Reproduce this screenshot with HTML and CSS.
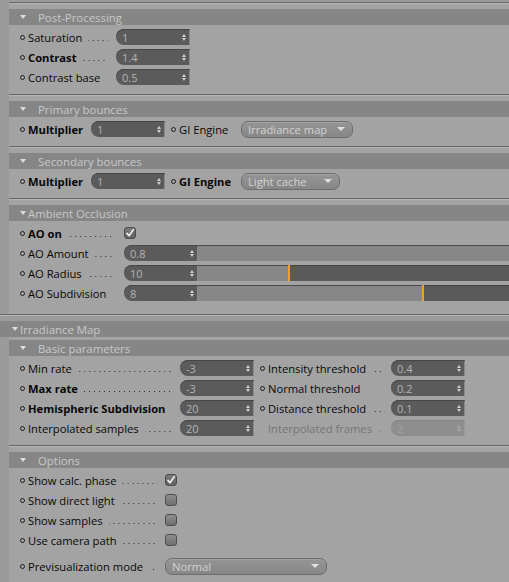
FILE: index.html
```html
<!DOCTYPE html>
<html lang="en">
<head>
    <meta charset="UTF-8">
    <title>Global Illumination</title>
    <link rel="stylesheet" href="styles.css">
</head>
<body>
    <section class="group">
        <div class="group-head"><i class="tri"></i>Post-Processing</div>
        <div class="row">
            <span class="lbl w-post"><i class="dot"></i>Saturation<span class="leader"></span></span>
            <span class="num">1<span class="spin"></span></span>
        </div>
        <div class="row">
            <span class="lbl b w-post"><i class="dot"></i>Contrast<span class="leader"></span></span>
            <span class="num">1.4<span class="spin"></span></span>
        </div>
        <div class="row">
            <span class="lbl w-post"><i class="dot"></i>Contrast base</span>
            <span class="num">0.5<span class="spin"></span></span>
        </div>
    </section>

    <section class="group">
        <div class="group-head"><i class="tri"></i>Primary bounces</div>
        <div class="row">
            <span class="lbl b w-mul"><i class="dot"></i>Multiplier</span>
            <span class="num">1<span class="spin"></span></span>
            <span class="lbl w-gi"><i class="dot"></i>GI Engine</span>
            <span class="drop w-irr">Irradiance map<span class="caret"></span></span>
        </div>
    </section>

    <section class="group">
        <div class="group-head"><i class="tri"></i>Secondary bounces</div>
        <div class="row">
            <span class="lbl b w-mul"><i class="dot"></i>Multiplier</span>
            <span class="num">1<span class="spin"></span></span>
            <span class="lbl b w-gi"><i class="dot"></i>GI Engine</span>
            <span class="drop w-lc">Light cache<span class="caret"></span></span>
        </div>
    </section>

    <section class="group last">
        <div class="group-head"><i class="tri tight"></i>Ambient Occlusion</div>
        <div class="row">
            <span class="lbl b w-ao"><i class="dot"></i>AO on<span class="leader"></span></span>
            <span class="check on"><svg width="10" height="10" viewBox="0 0 10 10"><path d="M2 5.4 L4 7.8 L8.2 1.8" fill="none" stroke="#ececec" stroke-width="1.7" stroke-linecap="round" stroke-linejoin="round"/></svg></span>
        </div>
        <div class="row">
            <span class="lbl w-ao"><i class="dot"></i>AO Amount<span class="leader"></span></span>
            <span class="num">0.8<span class="spin"></span></span>
            <span class="track"><span class="fill" style="width: 100%"></span></span>
        </div>
        <div class="row">
            <span class="lbl w-ao"><i class="dot"></i>AO Radius<span class="leader"></span></span>
            <span class="num">10<span class="spin"></span></span>
            <span class="track"><span class="fill mark" style="width: 92px"></span></span>
        </div>
        <div class="row">
            <span class="lbl w-ao"><i class="dot"></i>AO Subdivision<span class="leader"></span></span>
            <span class="num">8<span class="spin"></span></span>
            <span class="track"><span class="fill mark" style="width: 226px"></span></span>
        </div>
    </section>

    <section class="section">
        <div class="section-head"><i class="tri tight"></i>Irradiance Map</div>

        <div class="group inner">
            <div class="group-head"><i class="tri"></i>Basic parameters</div>
            <div class="row">
                <span class="lbl w-basic"><i class="dot"></i>Min rate<span class="leader"></span></span>
                <span class="num">-3<span class="spin"></span></span>
                <span class="lbl w-thr"><i class="dot"></i>Intensity threshold<span class="leader"></span></span>
                <span class="num">0.4<span class="spin"></span></span>
            </div>
            <div class="row">
                <span class="lbl b w-basic"><i class="dot"></i>Max rate<span class="leader"></span></span>
                <span class="num">-3<span class="spin"></span></span>
                <span class="lbl w-thr"><i class="dot"></i>Normal threshold</span>
                <span class="num">0.2<span class="spin"></span></span>
            </div>
            <div class="row">
                <span class="lbl b w-basic"><i class="dot"></i>Hemispheric Subdivision</span>
                <span class="num">20<span class="spin"></span></span>
                <span class="lbl w-thr"><i class="dot"></i>Distance threshold<span class="leader"></span></span>
                <span class="num">0.1<span class="spin"></span></span>
            </div>
            <div class="row">
                <span class="lbl w-basic"><i class="dot"></i>Interpolated samples<span class="leader"></span></span>
                <span class="num">20<span class="spin"></span></span>
                <span class="lbl off w-thr"><i class="dot"></i>Interpolated frames<span class="leader"></span></span>
                <span class="num off">2<span class="spin"></span></span>
            </div>
        </div>

        <div class="group">
            <div class="group-head"><i class="tri"></i>Options</div>
            <div class="row">
                <span class="lbl w-opt"><i class="dot"></i>Show calc. phase<span class="leader"></span></span>
                <span class="check on"><svg width="10" height="10" viewBox="0 0 10 10"><path d="M2 5.4 L4 7.8 L8.2 1.8" fill="none" stroke="#ececec" stroke-width="1.7" stroke-linecap="round" stroke-linejoin="round"/></svg></span>
            </div>
            <div class="row">
                <span class="lbl w-opt"><i class="dot"></i>Show direct light<span class="leader"></span></span>
                <span class="check"></span>
            </div>
            <div class="row">
                <span class="lbl w-opt"><i class="dot"></i>Show samples<span class="leader"></span></span>
                <span class="check"></span>
            </div>
            <div class="row">
                <span class="lbl w-opt"><i class="dot"></i>Use camera path<span class="leader"></span></span>
                <span class="check"></span>
            </div>
            <div class="row spaced">
                <span class="lbl w-opt"><i class="dot"></i>Previsualization mode<span class="leader"></span></span>
                <span class="drop w-prev">Normal<span class="caret"></span></span>
            </div>
        </div>
    </section>
</body>
</html>
```

FILE: styles.css
```css
* {
    margin: 0;
    padding: 0;
    box-sizing: border-box;
}
body {
    background: #9b9b9b;
    font-family: "Open Sans", "DejaVu Sans", sans-serif;
    font-size: 11.2px;
    color: #080808;
    padding-top: 2px;
    overflow: hidden;
}

/* groups */
.group {
    margin-left: 9px;
    background: #a3a3a3;
    border-top: 1px solid #666;
    box-shadow: inset 0 1px 0 #b6b6b6;
    padding: 6px 0 7px;
}
.group.last {
    padding-bottom: 11px;
}
.group.inner {
    border-top: none;
    box-shadow: none;
    padding-top: 3px;
}
.group-head,
.section-head {
    display: flex;
    align-items: center;
    height: 16px;
    background: #868686;
    color: #c8c8c8;
    font-size: 11.4px;
    padding-left: 11px;
    margin-bottom: 2px;
}
.section {
    border-top: 1px solid #666;
    box-shadow: inset 0 1px 0 #b6b6b6;
    padding-top: 6px;
}
.section-head {
    padding-left: 12px;
    margin-bottom: 0;
}
.tri {
    width: 0;
    height: 0;
    border-left: 3.5px solid transparent;
    border-right: 3.5px solid transparent;
    border-top: 4px solid #dcdcdc;
    margin-right: 12px;
}
.tri.tight {
    margin-right: 2px;
}

/* rows */
.row {
    display: flex;
    align-items: center;
    height: 20px;
    padding-left: 11px;
}
.row.spaced {
    margin-top: 6px;
}
.lbl {
    display: flex;
    align-items: center;
    height: 20px;
    flex: none;
    white-space: nowrap;
}
.lbl.b {
    font-weight: 700;
}
.lbl.off {
    color: #767676;
}
.lbl.off .dot {
    visibility: hidden;
}
.dot {
    width: 5px;
    height: 5px;
    border: 1px solid #1c1c1c;
    border-radius: 50%;
    margin-right: 3px;
    flex: none;
}
.leader {
    flex: 1;
    align-self: flex-end;
    height: 1px;
    margin: 0 0 6px 6px;
    background: linear-gradient(to right, #2e2e2e 1px, transparent 1px) right center / 5px 1px repeat-x;
}
.lbl.off .leader {
    background-image: linear-gradient(to right, #7c7c7c 1px, transparent 1px);
}

.w-post { width: 88px; margin-right: 8px; }
.w-mul { width: 64px; margin-right: 7px; }
.w-gi { width: 63px; margin-left: 6px; margin-right: 7px; }
.w-ao { width: 95px; margin-right: 9px; }
.w-basic { width: 154px; margin-right: 6px; }
.w-thr { width: 125px; margin-left: 6px; margin-right: 6px; }
.w-opt { width: 138px; margin-right: 7px; }

/* number field */
.num {
    display: flex;
    align-items: center;
    justify-content: space-between;
    flex: none;
    width: 74px;
    height: 16px;
    padding: 0 3px 0 6px;
    border-radius: 8px 1px 1px 8px;
    background: #5b5b5b;
    box-shadow: inset 0 1px 0 #464646, inset -1px 0 0 #8a8a8a;
    color: #b3b3b3;
    font-size: 11px;
}
.num.off {
    background: #8e8e8e;
    box-shadow: inset 0 1px 0 #848484, inset -1px 0 0 #9a9a9a;
    color: #a2a2a2;
}
.spin {
    display: flex;
    flex-direction: column;
    gap: 1px;
    margin-right: 1px;
}
.spin::before,
.spin::after {
    content: "";
    border-left: 2.5px solid transparent;
    border-right: 2.5px solid transparent;
}
.spin::before {
    border-bottom: 3px solid #cfcfcf;
}
.spin::after {
    border-top: 3px solid #cfcfcf;
}
.num.off .spin::before { border-bottom-color: #a6a6a6; }
.num.off .spin::after { border-top-color: #a6a6a6; }

/* slider */
.track {
    flex: 1;
    display: flex;
    height: 16px;
    background: #5a5a5a;
    box-shadow: inset 0 1px 0 #434343;
}
.fill {
    height: 100%;
    background: #878787;
    box-shadow: inset 0 1px 0 #4a4a4a;
}
.fill.mark {
    border-right: 2px solid #f0a21c;
}

/* dropdown */
.drop {
    display: flex;
    align-items: center;
    justify-content: space-between;
    flex: none;
    height: 17px;
    padding: 0 7px 0 6px;
    border: 1px solid #6d6d6d;
    border-radius: 7px;
    background: linear-gradient(#959595, #878787);
    box-shadow: inset 0 1px 0 #a2a2a2;
    color: #d3d3d3;
}
.caret {
    border-left: 4px solid transparent;
    border-right: 4px solid transparent;
    border-top: 4px solid #e0e0e0;
}
.w-irr { width: 112px; }
.w-lc { width: 99px; }
.w-prev { width: 162px; }

/* checkbox */
.check {
    display: flex;
    align-items: center;
    justify-content: center;
    flex: none;
    width: 12px;
    height: 12px;
    border: 1px solid #4d4d4d;
    border-radius: 3px;
    background: linear-gradient(#8e8e8e, #6f6f6f);
}
.check.on {
    background: linear-gradient(#7a7a7a, #636363);
}
```
